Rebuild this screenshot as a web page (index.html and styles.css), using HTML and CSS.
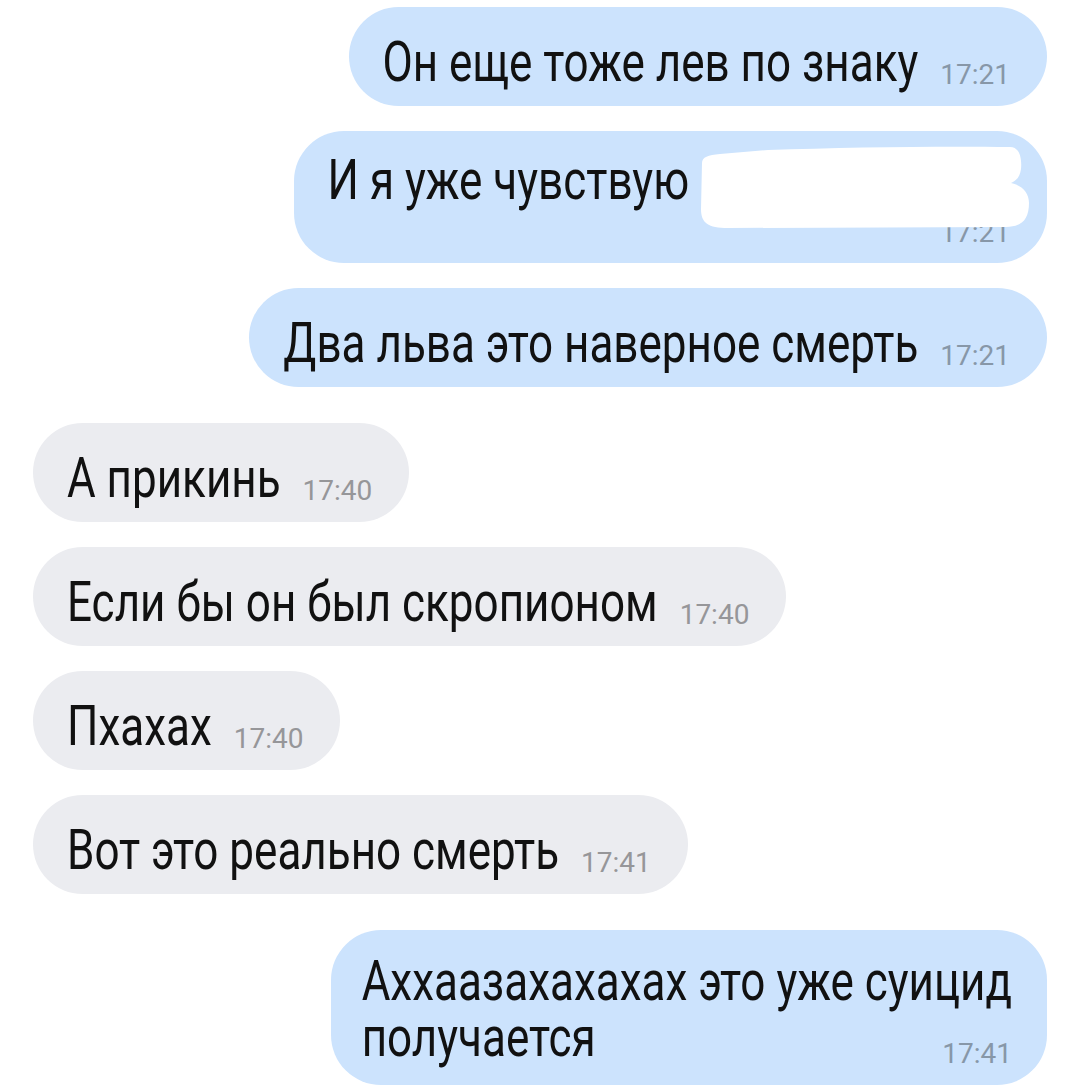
FILE: index.html
```html
<!DOCTYPE html>
<html lang="ru">
<head>
  <meta charset="UTF-8" />
  <meta name="viewport" content="width=device-width, initial-scale=1.0" />
  <title>Чат</title>
  <link rel="stylesheet" href="styles.css">
</head>
<body>
  <div class="chat">
    <div class="msg out">
      <span class="text">Он еще тоже лев по знаку</span>
      <span class="time">17:21</span>
    </div>

    <div class="msg out stacked">
      <span class="text">И я уже чувствую <span class="hidden-word"></span></span>
      <span class="time">17:21</span>
      <svg class="scribble" width="334" height="86" viewBox="0 0 334 86">
        <path d="M4 18 C4 12 10 10 22 9 L70 5 C150 2 250 1 312 2 C322 2 324 14 323 24 C322 32 318 36 313 38 C324 40 331 48 331 58 C331 74 324 82 308 82 L30 83 C10 83 3 78 3 64 Z" fill="#fff"/>
      </svg>
    </div>

    <div class="msg out">
      <span class="text">Два льва это наверное смерть</span>
      <span class="time">17:21</span>
    </div>

    <div class="msg in first">
      <span class="text">А прикинь</span>
      <span class="time">17:40</span>
    </div>

    <div class="msg in">
      <span class="text">Если бы он был скропионом</span>
      <span class="time">17:40</span>
    </div>

    <div class="msg in">
      <span class="text">Пхахах</span>
      <span class="time">17:40</span>
    </div>

    <div class="msg in">
      <span class="text">Вот это реально смерть</span>
      <span class="time">17:41</span>
    </div>

    <div class="msg out first multi">
      <span class="text">Аххаазахахахах это уже суицид</span>
      <div class="last-line">
        <span class="text">получается</span>
        <span class="time">17:41</span>
      </div>
    </div>
  </div>
</body>
</html>
```

FILE: styles.css
```css
body { margin: 0; background: #fff; font-family: Roboto, "Noto Sans", sans-serif; color: #111; overflow: hidden; }
.chat { display: flex; flex-direction: column; gap: 25px; padding: 7px 33px 0; }

/* bubble */
.msg { position: relative; display: flex; align-items: flex-end; border-radius: 50px; padding: 39px 37px 14px 34px; font-size: 44px; line-height: 40px; }
.msg.out { align-self: flex-end; background: #cce3fd; }
.msg.in { align-self: flex-start; background: #ebecf0; }
.msg.first { margin-top: 11px; }

/* message text is drawn tall and narrow, scaled around its baseline */
.text { display: block; white-space: nowrap; margin-bottom: 6px; transform: scaleY(1.28); transform-origin: 50% 35px; }
.time { font-size: 28px; line-height: 34px; margin-left: 22px; color: #8797a8; white-space: nowrap; }
.msg.in .time { color: #969699; }

/* bubble with a hidden word, time drops to its own row */
.stacked { flex-direction: column; align-items: flex-end; padding-top: 33px; padding-bottom: 13px; }
.stacked .text { align-self: flex-start; margin-bottom: 0; }
.stacked .time { margin-top: 12px; }
.hidden-word { display: inline-block; width: 310px; }
.scribble { position: absolute; right: 15px; top: 14px; }

/* two-line bubble, time sits beside the last line */
.multi { flex-direction: column; align-items: stretch; padding-top: 35px; padding-left: 31px; padding-right: 35px; }
.multi > .text { margin-bottom: 0; }
.last-line { display: flex; align-items: flex-end; justify-content: space-between; margin-top: 16px; }
.last-line .text { margin-bottom: 10px; }
```
